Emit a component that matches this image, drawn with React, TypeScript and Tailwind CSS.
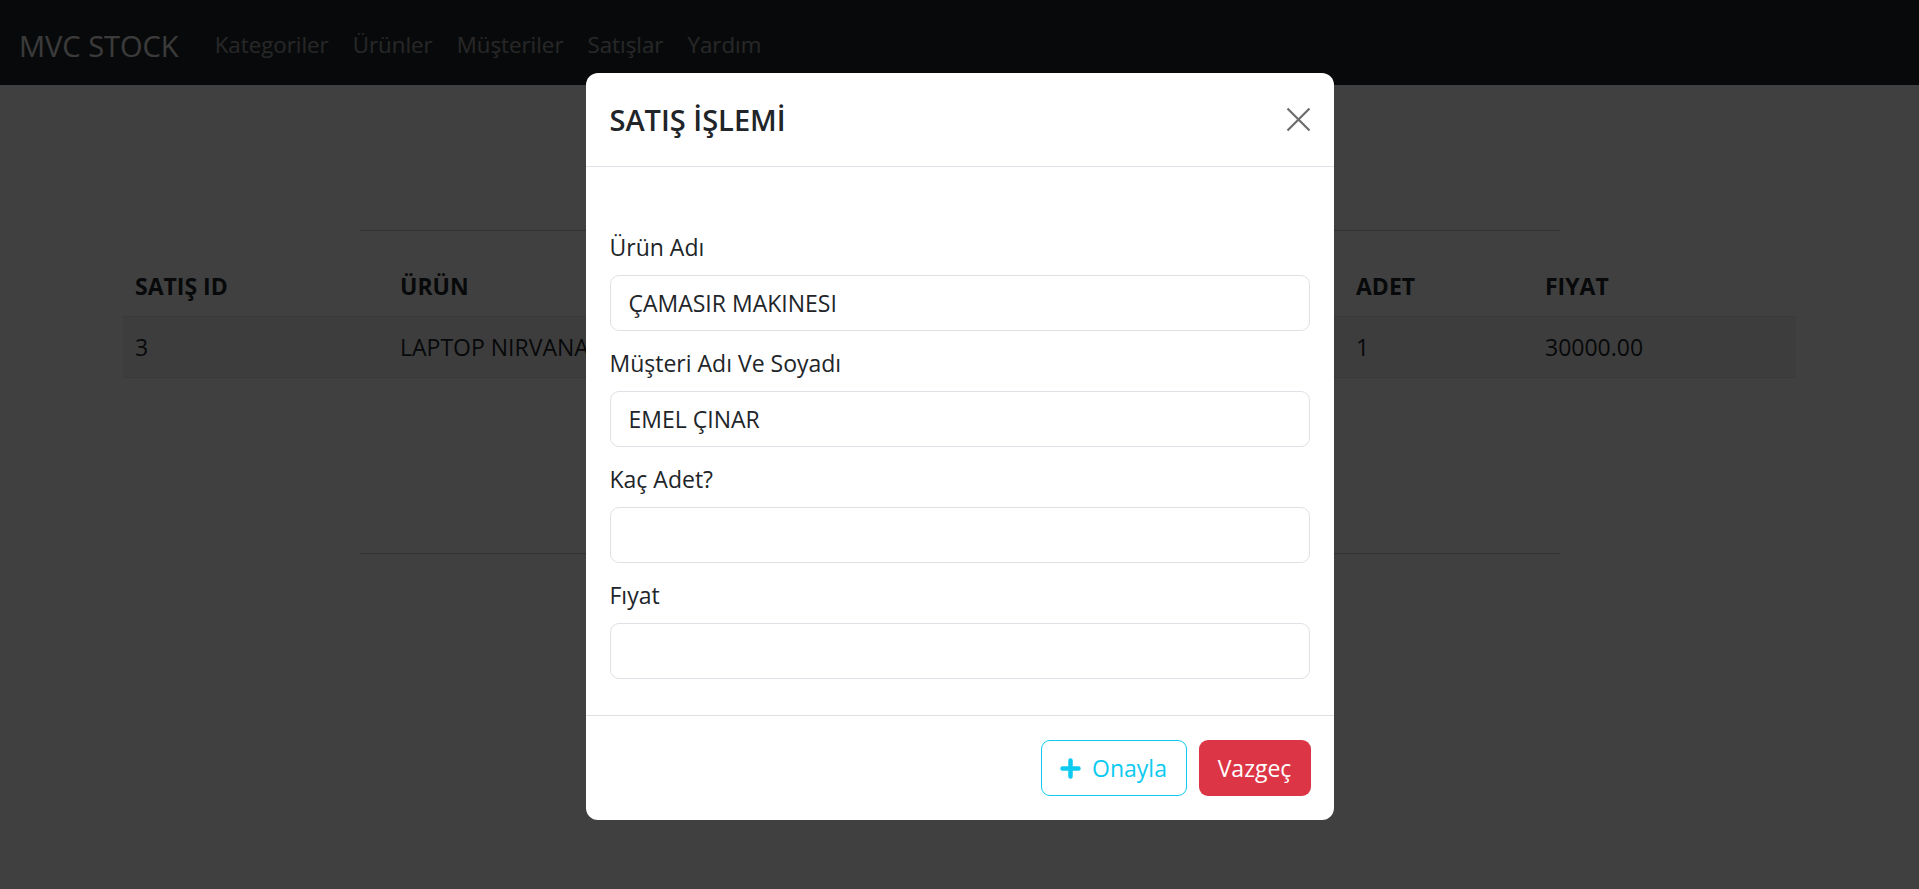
export default function App() {
  const links = ["Kategoriler", "Ürünler", "Müşteriler", "Satışlar", "Yardım"];
  const fields: { label: string; value: string }[] = [
    { label: "Ürün Adı", value: "ÇAMASIR MAKINESI" },
    { label: "Müşteri Adı Ve Soyadı", value: "EMEL ÇINAR" },
    { label: "Kaç Adet?", value: "" },
    { label: "Fıyat", value: "" },
  ];
  return (
    <div className="relative h-[889px] overflow-hidden bg-white font-['Open_Sans',sans-serif] text-[23px] text-[#212529]">
      <nav className="flex h-[85px] items-center bg-[#212529] px-[19px] pt-[5px]">
        <span className="mr-[24px] text-[29px] leading-none text-white/90">MVC STOCK</span>
        <ul className="flex">
          {links.map((l) => (
            <li key={l} className="px-[12px] text-[22.3px] leading-none text-white/55">
              {l}
            </li>
          ))}
        </ul>
      </nav>

      <main className="pt-[145px]">
        <hr className="mx-auto w-[1200px] border-t border-[#212529]/25" />
        <table className="mx-auto mt-[25px] w-[1672px] table-fixed border-collapse text-left">
          <colgroup>
            <col className="w-[265px]" />
            <col className="w-[478px]" />
            <col className="w-[478px]" />
            <col className="w-[189px]" />
            <col className="w-[263px]" />
          </colgroup>
          <thead>
            <tr className="border-b border-[#dee2e6]">
              <th className="px-[12px] py-[12px] font-bold leading-[36px]">SATIŞ ID</th>
              <th className="px-[12px] py-[12px] font-bold leading-[36px]">ÜRÜN</th>
              <th className="px-[12px] py-[12px] font-bold leading-[36px]">MÜŞTERİ</th>
              <th className="px-[12px] py-[12px] font-bold leading-[36px]">ADET</th>
              <th className="px-[12px] py-[12px] font-bold leading-[36px]">FIYAT</th>
            </tr>
          </thead>
          <tbody>
            <tr className="border-b border-[#dee2e6] bg-black/5">
              <td className="px-[12px] py-[12px] leading-[36px]">3</td>
              <td className="px-[12px] py-[12px] leading-[36px]">LAPTOP NIRVANA</td>
              <td className="px-[12px] py-[12px] leading-[36px]">EMEL ÇINAR</td>
              <td className="px-[12px] py-[12px] leading-[36px]">1</td>
              <td className="px-[12px] py-[12px] leading-[36px]">30000.00</td>
            </tr>
          </tbody>
        </table>
        <hr className="mx-auto mt-[175px] w-[1200px] border-t border-[#212529]/25" />
      </main>

      <div className="absolute inset-0 bg-black/75" />

      <div className="absolute inset-0 flex justify-center">
        <div className="mt-[73px] h-fit w-[748px] rounded-[12px] bg-white">
          <div className="flex h-[94px] items-center justify-between border-b border-[#dee2e6] pl-[24px] pr-[23px]">
            <h5 className="text-[29px] font-semibold leading-[45px] text-[#212529]">SATIŞ İŞLEMİ</h5>
            <svg width="25" height="25" viewBox="0 0 25 25" className="text-[#6c6c6c]">
              <path d="M1.5 1.5 L23.5 23.5 M23.5 1.5 L1.5 23.5" stroke="currentColor" strokeWidth="2.2" fill="none" />
            </svg>
          </div>
          <div className="px-[24px] pb-[36px] pt-[62px]">
            {fields.map((f, i) => (
              <div key={f.label} className={i > 0 ? "mt-[14px]" : ""}>
                <label className="mb-[10px] block leading-[36px] text-[#212529]">{f.label}</label>
                <div className="flex h-[56px] items-center rounded-[9px] border border-[#dee2e6] px-[18px] text-[#212529]">
                  {f.value}
                </div>
              </div>
            ))}
          </div>
          <div className="flex justify-end gap-[12px] border-t border-[#dee2e6] pb-[24px] pl-[24px] pr-[23px] pt-[24px]">
            <button className="flex h-[56px] w-[146px] items-center justify-center gap-[11px] rounded-[9px] border border-[#0dcaf0] text-[#0dcaf0]">
              <svg width="21" height="21" viewBox="0 0 21 21">
                <path d="M10.5 2.5 V18.5 M2.5 10.5 H18.5" stroke="#0dcaf0" strokeWidth="4.5" strokeLinecap="round" />
              </svg>
              <span>Onayla</span>
            </button>
            <button className="flex h-[56px] w-[112px] items-center justify-center rounded-[9px] bg-[#dc3545] text-white">
              Vazgeç
            </button>
          </div>
        </div>
      </div>
    </div>
  );
}
